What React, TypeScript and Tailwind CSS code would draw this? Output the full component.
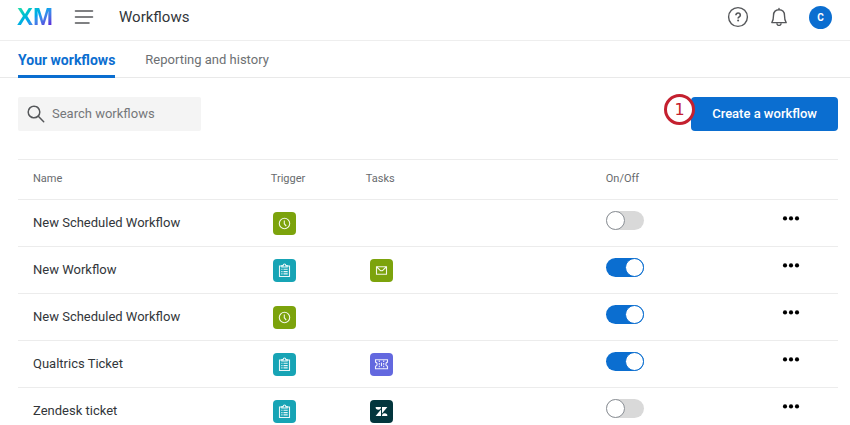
import { useState } from "react"

type IconKind = "clock" | "survey" | "mail" | "ticket" | "zendesk"

type Workflow = {
    id: number
    name: string
    trigger: IconKind
    task?: IconKind
    enabled: boolean
}

const WORKFLOWS: Workflow[] = [
    { id: 1, name: "New Scheduled Workflow", trigger: "clock", enabled: false },
    { id: 2, name: "New Workflow", trigger: "survey", task: "mail", enabled: true },
    { id: 3, name: "New Scheduled Workflow", trigger: "clock", enabled: true },
    { id: 4, name: "Qualtrics Ticket", trigger: "survey", task: "ticket", enabled: true },
    { id: 5, name: "Zendesk ticket", trigger: "survey", task: "zendesk", enabled: false },
]

const TILE_COLORS: Record<IconKind, string> = {
    clock: "bg-[#7ca30c]",
    survey: "bg-[#17a4b5]",
    mail: "bg-[#7ca30c]",
    ticket: "bg-[#6368df]",
    zendesk: "bg-[#03363d]",
}

const TILE_LABELS: Record<IconKind, string> = {
    clock: "Schedule",
    survey: "Survey response",
    mail: "Email",
    ticket: "Ticket",
    zendesk: "Zendesk",
}

const TileGlyph = ({ kind }: { kind: IconKind }) => {
    switch (kind) {
        case "clock":
            return (
                <>
                    <circle cx="11.5" cy="11.5" r="5.2" />
                    <path d="M11.3 8.5v3.2l1.9 2.5" />
                </>
            )
        case "survey":
            return (
                <>
                    <path d="M8.8 7H6.5v10.5h10V7h-2.3" />
                    <path d="M8.8 8V6.6h1.4c0-2.2 2.6-2.2 2.6 0h1.4V8z" />
                    <path d="M8.3 10.3h1.2M10.5 10.3h4.2M8.3 12.6h1.2M10.5 12.6h4.2M8.3 14.9h1.2M10.5 14.9h4.2" />
                </>
            )
        case "mail":
            return (
                <>
                    <path d="M6.5 7.7h10v7.5h-10z" />
                    <path d="M6.8 8l3.2 3.2q1.5 1.2 3 0L16.2 8" />
                </>
            )
        case "ticket":
            return (
                <>
                    <path d="M5.5 6.7h12v2.4c-2.2.4-2.2 3.8 0 4.2v2.5h-12v-2.5c2.2-.4 2.2-3.8 0-4.2z" />
                    <path d="M9.3 7.5v8M13.7 7.5v8" strokeDasharray="1.6 1" />
                    <path d="M11.5 9.6v3.6" />
                </>
            )
        case "zendesk":
            return (
                <g fill="#fff" stroke="none">
                    <path d="M11 9.4V16H5.6z" />
                    <path d="M11 7a2.7 2.7 0 0 1-5.4 0z" />
                    <path d="M12 16a2.7 2.7 0 0 1 5.4 0z" />
                    <path d="M12 13.6V7h5.4z" />
                </g>
            )
    }
}

const Tile = ({ kind }: { kind: IconKind }) => (
    <span className={`block size-[23px] rounded ${TILE_COLORS[kind]}`}>
        <svg viewBox="0 0 23 23" className="size-full" fill="none" stroke="#fff" strokeWidth="1.1" strokeOpacity="0.9" role="img" aria-label={TILE_LABELS[kind]}>
            <TileGlyph kind={kind} />
        </svg>
    </span>
)

const Header = () => (
    <header className="flex h-[41px] items-center border-b border-[#eeeeee] pr-[18px] pb-[6px] pl-[17px]">
        <span className="w-9 bg-linear-to-br from-[#21dbaa] from-10% via-[#00a3ee] via-50% to-[#5a1fd8] to-90% bg-clip-text font-['Liberation_Sans',sans-serif] text-2xl leading-6 font-bold text-transparent">XM</span>
        <button type="button" aria-label="Menu" className="ml-[21px]">
            <svg viewBox="0 0 20 16" className="h-4 w-5" fill="none" stroke="#55575a" strokeWidth="1.6" strokeLinecap="round">
                <path d="M1.5 2h17M1.5 8h17M1.5 14h13.5" />
            </svg>
        </button>
        <h1 className="ml-[25px] text-[15px] leading-5 text-[#32363a]">Workflows</h1>
        <div className="ml-auto flex items-center gap-[21px]">
            <button type="button" aria-label="Help">
                <svg viewBox="0 0 22 22" className="size-[22px]" fill="none" stroke="#55575a" strokeWidth="1.4">
                    <circle cx="11" cy="11" r="9.4" />
                    <path d="M8.9 9.2c0-2.9 4.4-2.8 4.4 0 0 1.6-2.2 1.7-2.2 3.3" strokeWidth="1.6" />
                    <circle cx="11.1" cy="14.6" r="1" fill="#55575a" stroke="none" />
                </svg>
            </button>
            <button type="button" aria-label="Notifications">
                <svg viewBox="0 0 18 20" className="h-5 w-[18px]" fill="none" stroke="#55575a" strokeWidth="1.4" strokeLinejoin="round">
                    <path d="M9 1.4v1.2M1.8 15.6c1.2-1.5 1.7-2.8 1.7-7 0-3.5 2.2-5.8 5.5-5.8s5.5 2.3 5.5 5.8c0 4.2.5 5.5 1.7 7z" strokeLinecap="round" />
                    <path d="M6.9 16.2c.2 2.9 4 2.9 4.2 0" />
                </svg>
            </button>
            <button type="button" aria-label="Account" className="size-[23px] rounded-full bg-[#0b6ed0] text-[10px] font-bold text-white">C</button>
        </div>
    </header>
)

const Tabs = () => (
    <nav className="flex h-[37px] gap-[30px] border-b border-[#e9e9e9] px-[18px]">
        <a href="#workflows" aria-current="page" className="h-[37px] border-b-3 border-[#0b6ed0] pt-[9px] text-sm leading-5 font-bold text-[#0b6ed0]">Your workflows</a>
        <a href="#reporting" className="pt-[9px] text-[13px] leading-5 text-[#6d7073]">Reporting and history</a>
    </nav>
)

const Toolbar = () => (
    <div className="flex items-center justify-between pt-[19px]">
        <label className="flex h-[34px] w-[183px] items-center gap-[7px] rounded-xs bg-[#f4f4f4] pl-[9px]">
            <svg viewBox="0 0 18 18" className="size-[18px] shrink-0" fill="none" stroke="#55575a" strokeWidth="1.5" strokeLinecap="round">
                <circle cx="7" cy="7" r="5.8" />
                <path d="M11.3 11.3l5.4 5.4" />
            </svg>
            <input type="text" aria-label="Search workflows" placeholder="Search workflows" className="w-full min-w-0 bg-transparent text-[13px] outline-none placeholder:text-[#75777a]" />
        </label>
        <div className="relative">
            <button type="button" className="h-[34px] rounded bg-[#0b6ed0] px-[21px] text-[13px] font-medium text-white">Create a workflow</button>
            <span className="absolute -top-[3px] -left-[27px] flex size-[31px] items-center justify-center rounded-full border-3 border-[#c4202f] bg-white font-['DejaVu_Sans',sans-serif] text-base leading-none text-[#c4202f]">1</span>
        </div>
    </div>
)

const App = () => {
    const [workflows, setWorkflows] = useState(WORKFLOWS)

    const toggle = (id: number) => {
        setWorkflows(workflows.map((w) => (w.id === id ? { ...w, enabled: !w.enabled } : w)))
    }

    return (
        <div className="min-h-screen bg-white font-[Roboto,sans-serif] text-[#32363a]">
            <Header />
            <Tabs />
            <main className="pr-3 pl-[18px]">
                <Toolbar />
                <table className="mt-7 w-full table-fixed border-collapse text-left">
                    <thead>
                        <tr className="h-10 border-y border-[#ececec] text-[11px] text-[#686b6e]">
                            <th className="w-[29%] pl-[15px] font-normal">Name</th>
                            <th className="w-[95px] pl-[15px] font-normal">Trigger</th>
                            <th className="w-60 pl-[15px] font-normal">Tasks</th>
                            <th className="w-[177px] pl-[15px] font-normal">On/Off</th>
                            <td></td>
                        </tr>
                    </thead>
                    <tbody>
                        {workflows.map((w) => (
                            <tr key={w.id} className="h-[47px] border-b border-[#ececec]">
                                <td className="pl-[15px] text-[13px]">{w.name}</td>
                                <td className="pl-[17px]"><Tile kind={w.trigger} /></td>
                                <td className="pl-[19px]">{w.task && <Tile kind={w.task} />}</td>
                                <td className="pt-[11px] pl-[15px] align-top">
                                    <input
                                        type="checkbox"
                                        role="switch"
                                        aria-label={`Turn on ${w.name}`}
                                        checked={w.enabled}
                                        onChange={() => toggle(w.id)}
                                        className="block h-[19px] w-[38px] appearance-none rounded-full bg-[#d9d9d9] before:block before:size-[19px] before:rounded-full before:border before:border-[#8b9096] before:bg-white checked:bg-[#0b6ed0] checked:before:ml-[19px] checked:before:border-[#0b6ed0]"
                                    />
                                </td>
                                <td className="pt-[15px] pl-[14px] align-top">
                                    <button type="button" aria-label={`Actions for ${w.name}`} className="block">
                                        <svg viewBox="0 0 18 6" className="h-[6px] w-[18px]" fill="#000">
                                            <circle cx="3" cy="3.4" r="2.1" />
                                            <circle cx="9" cy="3.4" r="2.1" />
                                            <circle cx="15" cy="3.4" r="2.1" />
                                        </svg>
                                    </button>
                                </td>
                            </tr>
                        ))}
                    </tbody>
                </table>
            </main>
        </div>
    )
}

export default App
